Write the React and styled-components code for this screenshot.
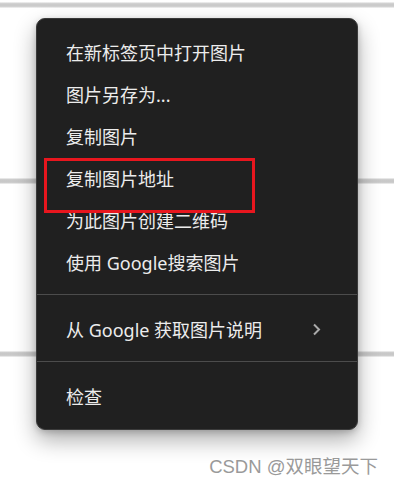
import styled, { createGlobalStyle } from "styled-components";

const GlobalStyle = createGlobalStyle`
    html, body {
        margin: 0;
        padding: 0;
        background: #ffffff;
    }
    body {
        font-family: "Noto Sans", "Noto Sans CJK SC", sans-serif;
    }
`;

const Page = styled.div`
    position: relative;
    width: 394px;
    height: 484px;
    overflow: hidden;
    display: flex;
    flex-direction: column;
    padding: 18px 0 0 36px;
    box-sizing: border-box;
    background-color: #ffffff;
    background-image:
        linear-gradient(to bottom, transparent 2px, #d4d4d4 3px, #c8c8c8 5px, #d4d4d4 7px, transparent 8px),
        linear-gradient(to bottom, transparent 178px, #cfcfcf 179px, #c6c6c6 181px, #cfcfcf 183px, transparent 184px),
        linear-gradient(to bottom, transparent 351px, #cfcfcf 352px, #c6c6c6 354px, #cfcfcf 356px, transparent 357px);
`;

const Menu = styled.div`
    position: relative;
    width: 322px;
    box-sizing: border-box;
    padding: 12px 0;
    background: #202020;
    border: 1px solid #3a3a3a;
    border-radius: 9px;
    box-shadow: 0 10px 22px rgba(0, 0, 0, 0.32), 0 2px 6px rgba(0, 0, 0, 0.18);
`;

const Item = styled.div`
    display: flex;
    align-items: center;
    height: 42px;
    padding: 0 36px 0 29px;
    color: #ececec;
    font-size: 18px;
    white-space: nowrap;
`;

const Arrow = styled.svg`
    margin-left: auto;
    width: 9px;
    height: 13px;
`;

const Separator = styled.div`
    height: 1px;
    margin: 11px 0 13px;
    background: #4c4c4c;
`;

const Highlight = styled.div`
    position: absolute;
    left: 7px;
    top: 139px;
    width: 211px;
    height: 55px;
    box-sizing: border-box;
    border: 3px solid #e8161e;
    pointer-events: none;
`;

const Watermark = styled.div`
    align-self: flex-end;
    margin: 22px 16px 0 0;
    color: #9a9a9a;
    font-family: "Liberation Sans", "Noto Sans CJK SC", sans-serif;
    font-size: 18.5px;
    white-space: nowrap;
`;

const items = [
    "在新标签页中打开图片",
    "图片另存为...",
    "复制图片",
    "复制图片地址",
    "为此图片创建二维码",
    "使用 Google搜索图片",
];

const App = () => {
    return (
        <>
            <GlobalStyle />
            <Page>
                <Menu>
                    {items.map(label => (
                        <Item key={label}>{label}</Item>
                    ))}
                    <Separator />
                    <Item>
                        从 Google 获取图片说明
                        <Arrow viewBox="0 0 9 13">
                            <path d="M2 1.5 L7 6.5 L2 11.5" fill="none" stroke="#aaaaaa" strokeWidth="2" />
                        </Arrow>
                    </Item>
                    <Separator />
                    <Item>检查</Item>
                    <Highlight />
                </Menu>
                <Watermark>CSDN @双眼望天下</Watermark>
            </Page>
        </>
    );
};

export default App;
